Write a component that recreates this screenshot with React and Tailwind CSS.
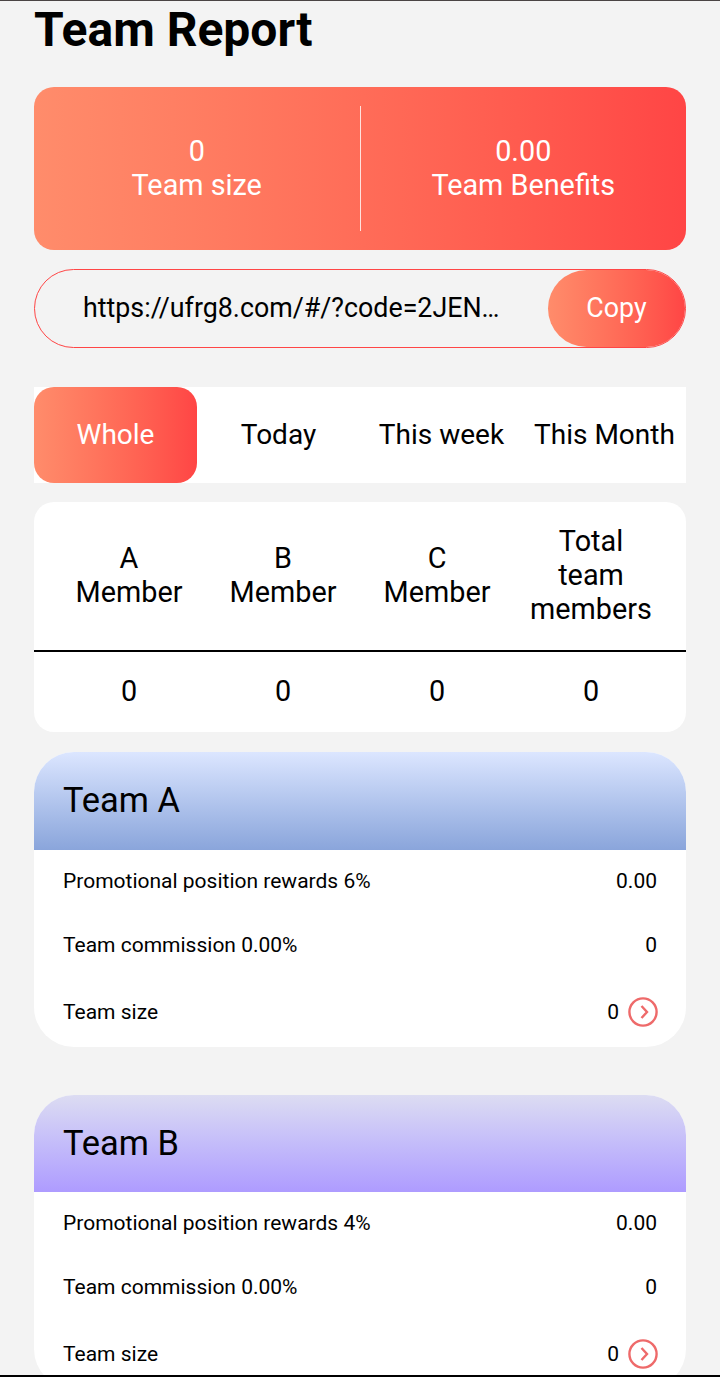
import React from 'react';

const members = ['A Member', 'B Member', 'C Member', 'Total team members'];
const tabs = ['Whole', 'Today', 'This week', 'This Month'];

function ArrowCircle() {
  return (
    <svg width="30" height="30" viewBox="0 0 30 30" fill="none" stroke="#ee6a6a" className="ml-[9px] -mr-px">
      <circle cx="15" cy="15" r="13.6" strokeWidth="2.4" />
      <path d="M13.5 9 L19 15 L13.5 21" strokeWidth="2.4" />
    </svg>
  );
}

function TeamCard({ name, reward, headClass }) {
  return (
    <div className="h-[294.4px] rounded-[40px] bg-white overflow-hidden">
      <div className={`h-[97.4px] flex items-center px-[29px] text-[34.4px] ${headClass}`}>{name}</div>
      <div className="px-[29px] text-[21px] leading-[24px] text-black">
        <div className="h-[62px] flex items-center justify-between">
          <span>Promotional position rewards {reward}</span>
          <span>0.00</span>
        </div>
        <div className="h-[66px] flex items-center justify-between">
          <span>Team commission 0.00%</span>
          <span>0</span>
        </div>
        <div className="h-[69px] pb-[1px] flex items-center justify-between">
          <span>Team size</span>
          <span className="flex items-center">0<ArrowCircle /></span>
        </div>
      </div>
    </div>
  );
}

export default function App() {
  return (
    <div className="relative h-[1377px] overflow-hidden bg-[#f3f3f3] px-[34px] font-['Roboto',sans-serif] text-black">
      <div className="absolute top-0 left-0 right-0 h-px bg-[#4a4444]" />

      <h1 className="h-[87px] pt-[1px] text-[48px] leading-[58px] font-bold">Team Report</h1>

      <div className="h-[163px] pb-[2px] rounded-[20px] bg-gradient-to-r from-[#ff8c6b] to-[#ff4545] flex items-center text-white text-[28.8px] leading-[34px] text-center">
        <div className="flex-1">
          <div>0</div>
          <div>Team size</div>
        </div>
        <div className="w-px h-[125px] mt-[2px] bg-[#ffffffcc]" />
        <div className="flex-1">
          <div>0.00</div>
          <div>Team Benefits</div>
        </div>
      </div>

      <div className="mt-[19px] h-[79px] rounded-full border border-[#ff4545] flex items-center">
        <div className="flex-1 min-w-0 pl-[48px] pr-[47px] text-[26.8px] truncate">https://ufrg8.com/#/?code=2JENKQ7WX</div>
        <div className="w-[137px] h-full rounded-full bg-gradient-to-r from-[#ff8c6b] to-[#ff4545] flex items-center justify-center text-white text-[26.8px]">Copy</div>
      </div>

      <div className="mt-[39px] h-[96px] bg-white grid grid-cols-4 text-[28px]">
        {tabs.map((tab, i) => (
          <div
            key={tab}
            className={i === 0
              ? 'rounded-[20px] bg-gradient-to-r from-[#ff8c6b] to-[#ff4545] text-white flex items-center justify-center'
              : 'flex items-center justify-center whitespace-nowrap'}
          >
            {tab}
          </div>
        ))}
      </div>

      <div className="mt-[19px] h-[230px] rounded-[20px] bg-white overflow-hidden text-[28.8px] leading-[34px] text-center">
        <div className="h-[150px] pb-[2px] border-b-2 border-black grid grid-cols-4 px-[18px]">
          {members.map((m) => (
            <div key={m} className="flex items-center justify-center px-[30px]">{m}</div>
          ))}
        </div>
        <div className="h-[78px] grid grid-cols-4 px-[18px] items-center">
          {members.map((m) => (
            <div key={m}>0</div>
          ))}
        </div>
      </div>

      <div className="mt-[20.4px] flex flex-col gap-[48.2px]">
        <TeamCard name="Team A" reward="6%" headClass="bg-gradient-to-b from-[#dce6ff] to-[#8aa5db]" />
        <TeamCard name="Team B" reward="4%" headClass="bg-gradient-to-b from-[#dcdcf2] to-[#ae9bff]" />
      </div>

      <div className="absolute bottom-0 left-0 right-0 h-[2px] bg-black" />
    </div>
  );
}
